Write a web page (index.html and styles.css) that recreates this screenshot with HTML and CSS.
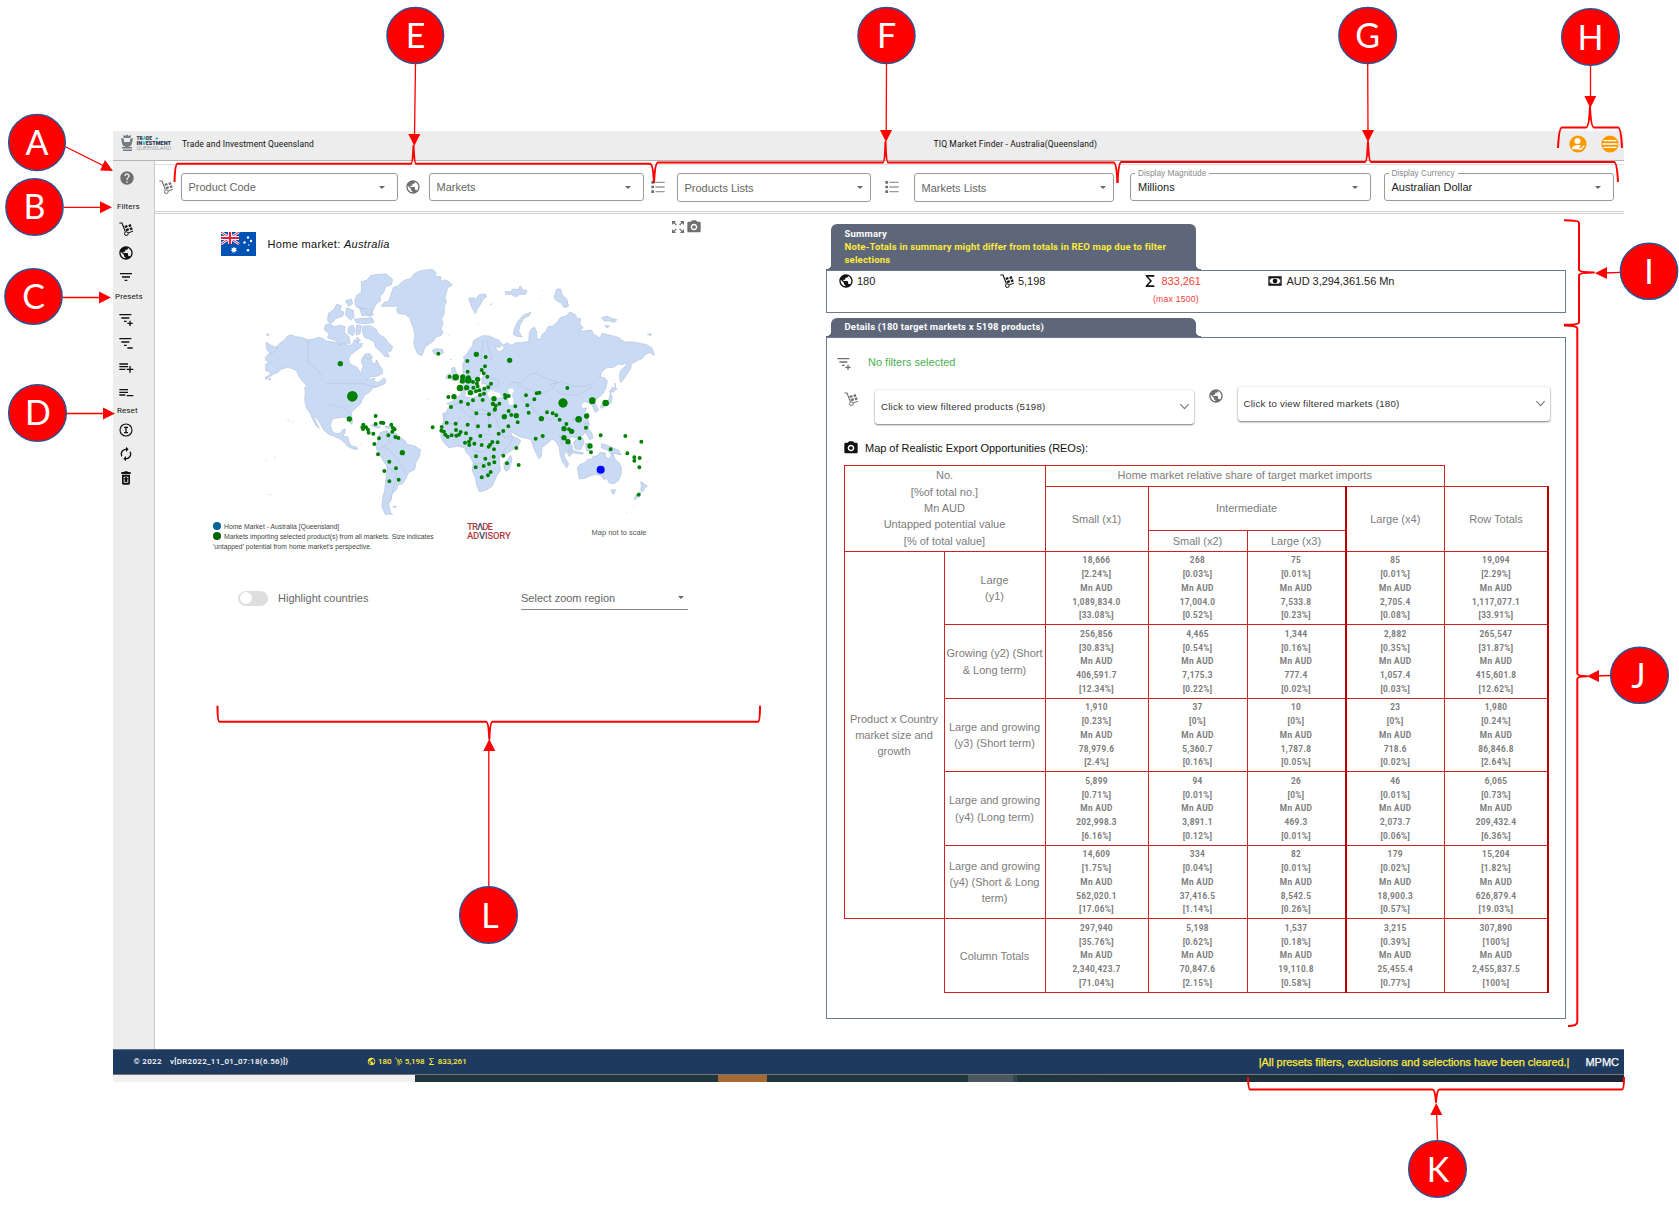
FILE: index.html
```html
<!DOCTYPE html>
<html lang="en">
<head>
<meta charset="utf-8">
<title>TIQ Market Finder</title>
<link rel="stylesheet" href="styles.css">
</head>
<body>
<svg class="defs" aria-hidden="true">
  <symbol id="help" viewBox="0 0 24 24"><path d="M12 2C6.48 2 2 6.48 2 12s4.480 10 10 10 10-4.480 10-10S17.520 2 12 2zm1 17h-2v-2h2v2zm2.070-7.750l-.9.920C13.450 12.900 13 13.500 13 15h-2v-.5c0-1.100.450-2.100 1.170-2.830l1.240-1.260c.370-.360.590-.860.590-1.410 0-1.100-.9-2-2-2s-2 .9-2 2H8c0-2.210 1.790-4 4-4s4 1.790 4 4c0 .880-.360 1.680-.930 2.250z"/></symbol>
  <symbol id="globe" viewBox="0 0 24 24"><path d="M12 2C6.480 2 2 6.480 2 12s4.480 10 10 10 10-4.480 10-10S17.520 2 12 2zm-1 17.930c-3.950-.490-7-3.850-7-7.930 0-.620.080-1.210.210-1.790L9 15v1c0 1.100.9 2 2 2v1.930zm6.900-2.540c-.260-.810-1-1.390-1.900-1.390h-1v-3c0-.550-.450-1-1-1H8v-2h2c.550 0 1-.450 1-1V7h2c1.100 0 2-.9 2-2v-.410c2.930 1.190 5 4.060 5 7.410 0 2.080-.8 3.970-2.100 5.390z"/></symbol>
  <symbol id="dolly" viewBox="0 0 24 24"><path d="M2 3h4l5 13" fill="none" stroke="currentColor" stroke-width="1.700"/><circle cx="12.500" cy="19" r="2.800" fill="none" stroke="currentColor" stroke-width="1.500"/><path d="M9.500 7.500l4-1.500 1.200 3-4 1.500zM15.500 6l3.500-1.500 1.200 3.500-3.500 1.300zM11.300 12.300l4.200-1.700 1.200 3.200-4.200 1.600zM17.500 10.500l3.500-1 1 3.300-3.500 1.200z"/><path d="M15 18l7.500-2.800" stroke="currentColor" stroke-width="1.500"/></symbol>
  <symbol id="filter" viewBox="0 0 24 24"><path d="M10 18h4v-2h-4v2zM3 6v2h18V6H3zm3 7h12v-2H6v2z"/></symbol>
  <symbol id="filter-plus" viewBox="0 0 24 24"><path d="M2 3h18v2H2zM5 8h12v2H5zM9 13h4v2H9zM17 13h2v3h3v2h-3v3h-2v-3h-3v-2h3z"/></symbol>
  <symbol id="filter-minus" viewBox="0 0 24 24"><path d="M2 3h18v2H2zM5 8h12v2H5zM9 13h4v2H9zM14 17h8v2h-8z"/></symbol>
  <symbol id="list-plus" viewBox="0 0 24 24"><path d="M2 5h13v2H2zM2 9h13v2H2zM2 13h9v2H2zM17 9h2v4h4v2h-4v4h-2v-4h-4v-2h4z"/></symbol>
  <symbol id="list-minus" viewBox="0 0 24 24"><path d="M2 6h13v2H2zM2 10h13v2H2zM2 14h9v2H2zM13 15h10v2H13z"/></symbol>
  <symbol id="list" viewBox="0 0 24 24"><path d="M2 3h4v4H2zM2 10h4v4H2zM2 17h4v4H2z"/><path opacity=".7" d="M8 4h14v2H8zM8 11h14v2H8zM8 18h14v2H8z"/></symbol>
  <symbol id="circle-i" viewBox="0 0 24 24"><circle cx="12" cy="12" r="9" fill="none" stroke="currentColor" stroke-width="1.700"/><path d="M9 7h6v2h-2v6h2v2H9v-2h2V9H9z"/></symbol>
  <symbol id="sync" viewBox="0 0 24 24"><path d="M12 6v3l4-4-4-4v3c-4.420 0-8 3.580-8 8 0 1.570.460 3.030 1.240 4.260L6.700 14.800c-.450-.830-.7-1.790-.7-2.800 0-3.310 2.690-6 6-6zm6.760 1.740L17.300 9.200c.440.840.7 1.790.7 2.800 0 3.310-2.690 6-6 6v-3l-4 4 4 4v-3c4.420 0 8-3.580 8-8 0-1.570-.460-3.030-1.240-4.260z"/></symbol>
  <symbol id="trash" viewBox="0 0 24 24"><path fill-rule="evenodd" d="M5 3h4l1-1h4l1 1h4v3H5zM6 7h12v13c0 1-1 2-2 2H8c-1 0-2-1-2-2zM8.500 10v9h7v-9zM12 10l4 4h-2v4h-4v-4H8z"/></symbol>
  <symbol id="camera" viewBox="0 0 24 24"><path d="M9 2L7.170 4H4c-1.100 0-2 .9-2 2v12c0 1.100.9 2 2 2h16c1.100 0 2-.9 2-2V6c0-1.100-.9-2-2-2h-3.170L15 2H9zm3 15c-2.760 0-5-2.240-5-5s2.240-5 5-5 5 2.240 5 5-2.240 5-5 5z"/><circle cx="12" cy="12" r="2.800"/></symbol>
  <symbol id="expand" viewBox="0 0 24 24"><path d="M3 3h6L6.900 5.100l3.300 3.300-1.300 1.300-3.300-3.300L3 9zM21 3v6l-2.600-2.600-3.300 3.300-1.300-1.300 3.300-3.300L15 3zM3 21v-6l2.600 2.600 3.300-3.300 1.300 1.300-3.300 3.300L9 21zM21 21h-6l2.100-2.100-3.300-3.300 1.300-1.300 3.300 3.300L21 15z"/></symbol>
  <symbol id="sigma" viewBox="0 0 24 24"><path d="M18.500 3h-13v1.800l6.500 7.200-6.500 7.200V21h13v-2.500H9.200l5.800-6.500-5.800-6.500h9.300z"/></symbol>
  <symbol id="money" viewBox="0 0 24 24"><path fill-rule="evenodd" d="M2 5h20v14H2zM4 8v8h16V8z"/><circle cx="12" cy="12" r="3.500"/><path d="M4 8h3L4 11zM20 8v3l-3-3zM4 16v-3l3 3zM20 16h-3l3-3z"/></symbol>
  <symbol id="chevron" viewBox="0 0 12 12"><path d="M1.500 3.500L6 8.300l4.500-4.800" fill="none" stroke="currentColor" stroke-width="1.200"/></symbol>
</svg>

<div class="app">
  <header class="topbar">
    <svg class="logo" viewBox="0 0 54 20">
      <g fill="#777b82"><path d="M3 1l2 1 2-1.500L9 2l2-1-.5 3h-7z"/><path d="M1 4l3 1v3l6 0V5l3-1-1 5-1 3H3L2 9z"/><path d="M4 8h6v4l-3 2-3-2zM2 13h10v1.500H2zM3 15.500h9V17H3z"/></g>
      <g font-family="Roboto, sans-serif" font-weight="900" font-size="6">
        <text x="16.500" y="5.800" textLength="15.500" lengthAdjust="spacingAndGlyphs" fill="#26324b">TR<tspan fill="#19bfc4">A</tspan>DE</text>
        <text x="35" y="5.600" fill="#19bfc4">+</text>
        <text x="16.500" y="11" textLength="34.500" lengthAdjust="spacingAndGlyphs" fill="#26324b">IN<tspan fill="#19bfc4">V</tspan>ESTMENT</text>
        <text x="16.500" y="16.400" textLength="34.500" lengthAdjust="spacingAndGlyphs" font-weight="300" fill="#777">QUEENSLAND</text>
      </g>
    </svg>
    <span class="org">Trade and Investment Queensland</span>
    <span class="title">TIQ Market Finder - Australia(Queensland)</span>
    <svg class="round" viewBox="0 0 18 18"><circle cx="9" cy="9" r="8.600" fill="#ff9800"/><circle cx="8.500" cy="6" r="3" fill="#fff"/><path d="M2.800 14c.5-3 3-4 5.700-4 1.500 0 2.500.2 3.500.9l-2.500 2.300.8 1.300z" fill="#fff"/><path d="M9.500 12.500l2 2 4-4" stroke="#fff" stroke-width="1.300" fill="none"/></svg>
    <svg class="round" viewBox="0 0 18 18"><circle cx="9" cy="9" r="8.600" fill="#ff9800"/><path d="M2.500 5.700h13M1.500 9h15M2.500 12.300h13" stroke="#fff" stroke-width="1.300"/></svg>
  </header>

  <div class="body">
    <nav class="side">
      <div class="cell first"><svg class="i gray"><use href="#help"/></svg></div>
      <div class="lbl filters">Filters</div>
      <div class="cell"><svg class="i"><use href="#dolly"/></svg></div>
      <div class="cell"><svg class="i"><use href="#globe"/></svg></div>
      <div class="cell"><svg class="i"><use href="#filter"/></svg></div>
      <div class="lbl presets">Presets</div>
      <div class="cell"><svg class="i"><use href="#filter-plus"/></svg></div>
      <div class="cell"><svg class="i"><use href="#filter-minus"/></svg></div>
      <div class="cell"><svg class="i"><use href="#list-plus"/></svg></div>
      <div class="cell"><svg class="i"><use href="#list-minus"/></svg></div>
      <div class="lbl reset">Reset</div>
      <div class="cell"><svg class="i"><use href="#circle-i"/></svg></div>
      <div class="cell"><svg class="i"><use href="#sync"/></svg></div>
      <div class="cell"><svg class="i"><use href="#trash"/></svg></div>
    </nav>

    <div class="content">
      <div class="toolbar">
        <svg class="i gray"><use href="#dolly"/></svg>
        <div class="select">Product Code<i class="caret"></i></div>
        <svg class="i gray"><use href="#globe"/></svg>
        <div class="select">Markets<i class="caret"></i></div>
        <svg class="i gray listicon"><use href="#list"/></svg>
        <div class="select tall">Products Lists<i class="caret"></i></div>
        <svg class="i gray"><use href="#list"/></svg>
        <div class="select tall">Markets Lists<i class="caret"></i></div>
        <div></div>
        <div class="select dark"><span class="float">Display Magnitude</span>Millions<i class="caret"></i></div>
        <div></div>
        <div class="select dark"><span class="float">Display Currency</span>Australian Dollar<i class="caret"></i></div>
      </div>

      <main class="main">
        <section class="mappane">
          <div class="maptools"><svg class="i gray"><use href="#expand"/></svg><svg class="i gray"><use href="#camera"/></svg></div>
          <div class="home">
            <svg class="flag" viewBox="0 0 35 24"><path fill="#0052b4" d="M0 0h35v24H0z"/><path d="M0 0l18 12M18 0L0 12" stroke="#fff" stroke-width="2.600"/><path d="M0 0l18 12M18 0L0 12" stroke="#e0203c" stroke-width="1"/><path d="M9 0v12M0 6h18" stroke="#fff" stroke-width="4"/><path d="M9 0v12M0 6h18" stroke="#e0203c" stroke-width="2.200"/><g fill="#fff"><path d="M13 14.500l.8 1.800 1.900-.5-.9 1.700 1.500 1.200-1.900.4 0 1.900-1.400-1.300-1.500 1.300v-1.900l-1.900-.4 1.500-1.200-.9-1.700 1.900.5z"/><circle cx="27" cy="5.500" r="1.200"/><circle cx="23.500" cy="10.500" r="1.200"/><circle cx="30" cy="9" r="1.200"/><circle cx="27" cy="18.300" r="1.300"/><circle cx="27.800" cy="13" r=".7"/></g></svg>
            <span>Home market: <em>Australia</em></span>
          </div>
          <svg class="map" viewBox="195 170 1185 744">
            <g fill="#c9daf4" stroke="#b3c3dc" stroke-width="2" stroke-linejoin="round">
              <path d="M243 396l12-8 6-10 12-5 14 6 18 2 20 8 18-3 12-5 14 4 12 8 22 2 12 9 16-5 14 6 12-2 6-14 10 0 4 12 10-2-2 10-12 8-10 8-12 9-5 12 2 12 12 8 10 4 8 12 4 8 4-12 4-10-6-14 4-14 14-5 10 6 4 16 8 4 6-12 8 16 8 10 2 14-14 8-20 2-16 12 26-8-2 10 12 4 18-14 6 6-4 12-16 5-20 8-10 12-14 8-8 14-4 12-14 12-12 12-2 12 4 12-2 14-6-4-6-14-12-4-14 2-16 2-8 8-2 14 4 16 12 8 14-2 6-10 8-2-2 12-4 10 14 2 2 12 4 10 8 6 12 2 2 8-12-2-14-6-10-10-12-12-16-8-22-8-14-12-10-18-14-22-8-4 10 22 8 16-10-8-12-24-6-14-10-14-6-24 2-24-2-14 6-6-10-10-12-16-8-18-14-8-16-2-16 4-10 10-14 6-30 20-26 8 20-14 22-10 8-10-14-4-10-8 2-10 12-4-2-10-14-2z"/>
              <path d="M198 396l14 8 22 10-12 10-10 6-12-12zM198 372l10 0-4 5zM205 507l8-3-3 5z"/>
              <path d="M543 288l10-12 12-2 6-14 4-14 6-16 12-2 10-10 14-10 14-3 12-15 16-8 24-4 16 0 10 10-6 8 20 4-2 14 12-6 14 6 10 10-14 8-4 14-4 14 4 14-6 14 0 22-8 14 4 16-6 14 6 14-6 8-16 4-6 12-14 10-10 6-6 14-6 14-12-6-8-16-4-18 4-18-4-22-8-22-4-12-14-10-20-2-6-14 8-8z"/>
              <path d="M484 214l16-4 12-14 20-4 26-1 20 16-4 16-18 6-4 16-12 12 2 14-14 10-10 22-8 16-12-12-14-12-16-6-4-20 6-14 14-8zM382 330l4-22 14-8 10-18 14 4-4 14 12 6-4 12-20 6-8 10-10 4zM436 272l18-6 4 14-12 8zM440 292l20 8 2 20-10 10-16-16zM462 326l54-4 6 14-22 4-30-2zM478 292l34 6 8 16-34 2zM375 345l14-6 14 10 18-4 14 4-2 16 14 14 4 20-20 0-16 4-10-14-22-6 4-14-14-10zM446 350l12-6 8 14-8 18-14-8zM470 344l14 2-4 24-12 4zM488 348l22-2 18 10 8 16 18 10 10 14 14 14-6 14-12-4 8 20-14-2-14-16-14-12-2-14-16-10-14-4-6-16zM470 380l12 10-10 8zM492 432l18-2 8 12-16 4z"/>
              <path d="M697 420l10-5 20 2 4 10-14 6-14-2zM755 473l10-2 2 12 10 14-4 10-20 2 6-12-4-12zM740 495l10-6 4 8-6 8-10 0z"/>
              <path d="M806 264l16-2 4 8 10-16 18-4 6 8-12 10-6 14-10 14-6 14-8-14-6-14zM915 244l16 0 8-8 16 2 6-12 8 14 12 0-4 12-18 0-12 8-12-8-18 0zM940 372l4-20 10-20 16-18 22-8-4 10-16 8-12 20-4 18 10 18-16-2zM1062 262l8-26 12 0 6 20 12 10 6 22-14 4-8-14-14-6zM1205 322l16-4 14 6 16 4-8 8-14-4-16 0zM1215 345l14 2-8 6zM1342 372l12-2-2 6z"/>
              <path d="M788 462l6-12-4-10 10-8 8-14 10-12 2-14 12-8 16-8 20 1 12 6 16 6 12 14-8 8-16-2 12 16 16-8-2-14 14-6 8 8 18-8 16 0 20-4 2-24 6-14 10-4 6 14 0 20 12 2 4-14 12-10 6-14 14-2 14-12 10-14 16-4 12-12 16 8 4 10 12 2-2 16 10 12-14 6 16 4 14-4 10 2 4 10 20 12 6-14 18 4 30 8 20 14 26 0 20 4 20 4 16 10 8 22-16-8-10 4-12 14-16 6-16 10-2 14-8 12-12 18-10 12-4-22 4-14 16-16 4-10-14 8-12-2-16 10-22 2-14 14-4 12 14 4 8 8-4 22-10 18-16 14-10 4 6 16 8 14-10 8-8-18-8-10-16-6-12 10 4 12 14-2-8 18 12 16 4 14-6 18-14 16-20 8-14-4-10 12 12 14 4 20-12 14-10-18-6 16 14 24-6 12-12-18-8-22-2-22-12-20-10-4-16 14-14 10-2 28-8 6-14-30-8-26-16-6-20-4-18-10-8-8 4 16 18 8 8 6-8 16-26 18-20 12-10-24-12-24-6-20-2-20 2-14-16 4-20-4-10-12 12-8 0-12-12 4 2 14-6 14-10-10-6-18-14-16-6 4 14 18 12 8-6 8-4-14-18-16-12 4-6 14-12 18-16 6-14-4-4-28 24-2 2-18-14-10 16-4 12-12 12-8 6-14 8-6 2 12-2 12 18 4 16-4 14-8 2-12 14-10 0-10-12 2 0-18 12-18-4-8-10 6-8 18-4 14-2 18-8 18-10 0-4-14-16 4z"/>
              <path d="M740 602l8-14 22-8 30-6 8 6-2 16 22 10 14-10 20 6 18 4 8 20 8 24 10 20 8 12 24-4-4 18-20 22-14 20-2 18 4 24-12 16-6 16-8 16-18 12-20 4-8-20-4-22-10-22 4-22-10-20-12-12-4-14-22-4-26 4-16-16-8-20 6-20 0-14z"/>
              <path d="M932 735l4 14-8 26-8 8-8-6 0-20 10-8zM1028 674l6 4-2 8-6-4z"/>
              <path d="M540 668l18-8 10 6 22 4 12 12 14 10 4 10 22 4 20 12-4 20-10 18-4 22-18 8-8 18-10 16-14 4-4 14-14 12-2 16-8 12 2 14 4 14 8 10-10 4-14-8-10-22 2-26 6-24 4-36 4-34-14-22-20-34 4-18z"/>
              <path d="M578 888l12 0-6 5zM512 645l14-4 16 10-10 2zM556 648l14 0-2 6-12-2z"/>
              <path d="M1132 772l8-10 14-4 8-10 12-2 6-8 12-2 8-10 16 2 0 12 12 6 6-10 0-14 6 12 6 14 12 10 6 14 0 18-8 20-14 10-14-2-8-14-8 4-8-12-18-4-18 6-14 6-16 2-2-12zM1234 838l12 0-4 14-6-4z"/>
              <path d="M1322 814l8 4 12 10-8 6-6 10-6-4 2-12zM1320 844l4 4-14 16-8 4 4-12z"/>
              <path d="M1078 676l10 4 16 18 8 18-8 2-18-20zM1105 720l20 2 26 6-4 4-40-6zM1120 696l16-14 12 2 4 14-10 20-16-2zM1156 700l14-2-6 8 6 14-10 2zM1204 700l16 4 18 8 18 8 8 14-20-4-12 0-12-12-16-6zM1155 638l10 2 0 16 10 10 4 18-10 4-8-14-6-18zM1156 615l8-8-2 14zM1200 590l10-14 16-6 6-24 4 14-2 18-14 6-12 10zM1228 545l10-14 14 4-12 10zM1245 518l2 14zM1118 626l8 0-4 6z"/>
              <path d="M262 628l6 4M276 634l4 4M197 752l4 0M222 742l4 0M208 853l6 0M482 699l3 2M1340 755l6-4M1300 884l3 2M1278 905l3 2M683 566l4 2M745 376l3 0M833 338l3 2M870 283l10-3M1018 267l3-2M1025 240l3 0M750 447l6 2"/>
            </g>
            <g fill="#fff"><path d="M862 548l10-10 12 6 14 4 8 12-18 2-20 0zM924 536l14-2 4 10-8 8 6 16 0 14-12 2-4-18 4-14z"/></g>
            <g fill="none" stroke="#afbfd8" stroke-width="1.500">
              <path d="M325 387v70l20 14 20 26M378 520h112l18 6 20 4 16-6M388 582l30 8 20 6 14 18M850 390l-8 60M858 384l10 40 10 20-20 10M858 490l20 14 20 8-6 20M925 525l14-10 20 4 30-26 20-4 40 20 20 6-10 20-30 14-20-4-30-10-20-10M1048 522l40-8 30 14 40 0 20-10-4 14-44 24-50-6zM1010 560l-20 20 20 30 40 20 20-14M960 560l20 20M780 590l30 30 30-8 26 0 20-2M866 604v60M728 640h40l14-20M768 640l10 40M820 620l14 50 40 4M800 690l30 4 30-10M818 720l30 6 20-20 26-8M820 760h40l20-30M836 770l20 14 14-20M850 810l10-24M570 700l20-20M550 710l20 10 26 30 20 40M560 770l30 20-20 90M560 665l10 30-30 20"/>
            </g>
            <g stroke="#008000" stroke-linecap="round" stroke-width="12">
              <path d="M715 430h0M802 452h0M857 440h0M855 468h0M845 479h0M851 489h0M862 499h0M803 484h0M749 499h0M873 520h0M865 531h0M853 535h0M852 550h0M838 540h0M828 543h0M840 554h0M831 520h0M819 515h0M820 532h0M833 528h0M819 570h0M848 569h0M804 581h0M783 574h0M745 560h0M753 590h0M915 554h0M916 562h0M926 557h0M978 555h0M1010 549h0M1018 547h0M1003 567h0M982 585h0M946 588h0M1102 533h0M898 580h0M879 580h0M887 586h0M885 597h0"/>
              <path stroke-width="16" d="M421 460h0M829 432h0M929 450h0M762 559h0M788 500h0M833 507h0M811 547h0M800 532h0M882 565h0M805 503h0M787 512h0"/>
              <path stroke-width="20" d="M767 501h0M780 533h0M805 510h0M1177 571h0M1217 578h0"/>
              <path stroke-width="32" d="M457 558h0"/><path stroke-width="28" d="M1089 578h0"/>
              <g transform="translate(0 540)">
                <path d="M527 77h0M527 101h0M543 97h0M550 98h0M574 103h0M578 112h0M584 117h0M577 124h0M565 135h0M586 140h0M595 143h0M537 144h0M523 161h0M534 192h0M568 214h0M588 234h0M553 242h0M568 273h0M596 268h0M490 103h0M487 111h0M498 111h0M489 116h0M504 118h0M506 127h0M520 130h0M698 111h0M725 110h0M724 121h0M732 124h0M736 133h0M743 139h0M755 135h0M768 119h0M769 136h0M777 133h0M782 125h0M740 97h0M767 100h0M803 103h0M829 69h0M867 72h0M834 108h0M869 107h0M798 129h0M841 137h0M812 145h0M807 154h0M795 157h0M808 164h0M823 160h0M845 164h0M866 169h0M870 164h0M877 155h0M893 156h0M882 177h0M896 130h0M910 122h0M925 108h0M953 96h0M926 62h0M934 74h0M986 67h0M828 198h0M856 205h0M881 199h0M883 216h0M867 221h0M851 227h0M827 231h0M872 245h0M864 255h0M845 261h0M910 196h0M921 219h0M949 173h0M956 224h0M1007 145h0M1028 137h0M1041 66h0M1058 69h0M1069 75h0M1079 88h0M1099 101h0M1107 117h0M1158 112h0M1139 144h0M1173 186h0M1202 135h0M1232 177h0M1276 137h0M1324 154h0M1282 189h0M1303 201h0M1303 211h0M1319 203h0M1318 231h0M1316 313h0M884 58h0M878 41h0"/>
                <path stroke-width="16" d="M448 86h0M607 187h0M913 79h0M949 76h0M1024 85h0M1092 115h0M1115 123h0M1092 142h0M1104 154h0M1170 167h0M1160 77h0"/>
                <path stroke-width="20" d="M1136 87h0"/>
                <path stroke="#00f" stroke-width="24" d="M1202 238h0"/>
              </g>
            </g>
          </svg>
          <div class="mapfoot">
            <div class="legend"><i class="dot blue"></i>Home Market - Australia [Queensland]<br><i class="dot"></i>Markets importing selected product(s) from all markets. Size indicates<br>'untapped' potential from home market's perspective.</div>
            <div class="ta"><span class="t1">TR<b>Λ</b>DE</span><span class="t2">AD<b>V</b>ISORY</span></div>
            <span class="scale">Map not to scale</span>
          </div>
          <div class="controls">
            <span class="toggle"></span><span class="hl">Highlight countries</span>
            <div class="region">Select zoom region<i class="caret"></i></div>
          </div>
        </section>

        <section class="right">
          <div class="tab sum">Summary<br><span class="note">Note-Totals in summary might differ from totals in REO map due to filter selections</span></div>
          <div class="panel stats">
            <div><svg class="i"><use href="#globe"/></svg>180</div>
            <div><svg class="i"><use href="#dolly"/></svg>5,198</div>
            <div class="red"><svg class="i"><use href="#sigma"/></svg>833,261<small>(max 1500)</small></div>
            <div><svg class="i"><use href="#money"/></svg>AUD 3,294,361.56 Mn</div>
          </div>
          <div class="tab det">Details (180 target markets x 5198 products)</div>
          <div class="panel details">
            <div class="nofilter"><svg class="i gray"><use href="#filter-plus"/></svg>No filters selected</div>
            <div class="drops">
              <svg class="i gray d1"><use href="#dolly"/></svg>
              <div class="drop">Click to view filtered products (5198)<svg><use href="#chevron"/></svg></div>
              <svg class="i gray d2"><use href="#globe"/></svg>
              <div class="drop second">Click to view filtered markets (180)<svg><use href="#chevron"/></svg></div>
            </div>
            <div class="reo"><svg class="i"><use href="#camera"/></svg>Map of Realistic Export Opportunities (REOs):</div>
            <table>
              <colgroup><col class="c1"><col class="c2"><col class="c3"><col class="c4"><col class="c5"><col class="c6"><col class="c7"></colgroup>
              <tr class="h1"><th colspan="2" rowspan="3">No.<br>[%of total no.]<br>Mn AUD<br>Untapped potential value<br>[% of total value]</th><th colspan="4">Home market relative share of target market imports</th><td class="none"></td></tr>
              <tr class="h2"><th rowspan="2">Small (x1)</th><th colspan="2" class="thick">Intermediate</th><th rowspan="2">Large (x4)</th><th rowspan="2" class="thick">Row Totals</th></tr>
              <tr class="h3"><th>Small (x2)</th><th class="thick">Large (x3)</th></tr>
              <tr><th rowspan="5">Product x Country market size and growth</th><th>Large<br>(y1)</th><td>18,666<br>[2.24%]<br>Mn AUD<br>1,089,834.0<br>[33.08%]</td><td>268<br>[0.03%]<br>Mn AUD<br>17,004.0<br>[0.52%]</td><td class="thick">75<br>[0.01%]<br>Mn AUD<br>7,533.8<br>[0.23%]</td><td>85<br>[0.01%]<br>Mn AUD<br>2,705.4<br>[0.08%]</td><td class="thick">19,094<br>[2.29%]<br>Mn AUD<br>1,117,077.1<br>[33.91%]</td></tr>
              <tr><th>Growing (y2) (Short<br>&amp; Long term)</th><td>256,856<br>[30.83%]<br>Mn AUD<br>406,591.7<br>[12.34%]</td><td>4,465<br>[0.54%]<br>Mn AUD<br>7,175.3<br>[0.22%]</td><td class="thick">1,344<br>[0.16%]<br>Mn AUD<br>777.4<br>[0.02%]</td><td>2,882<br>[0.35%]<br>Mn AUD<br>1,057.4<br>[0.03%]</td><td class="thick">265,547<br>[31.87%]<br>Mn AUD<br>415,601.8<br>[12.62%]</td></tr>
              <tr><th>Large and growing<br>(y3) (Short term)</th><td>1,910<br>[0.23%]<br>Mn AUD<br>78,979.6<br>[2.4%]</td><td>37<br>[0%]<br>Mn AUD<br>5,360.7<br>[0.16%]</td><td class="thick">10<br>[0%]<br>Mn AUD<br>1,787.8<br>[0.05%]</td><td>23<br>[0%]<br>Mn AUD<br>718.6<br>[0.02%]</td><td class="thick">1,980<br>[0.24%]<br>Mn AUD<br>86,846.8<br>[2.64%]</td></tr>
              <tr><th>Large and growing<br>(y4) (Long term)</th><td>5,899<br>[0.71%]<br>Mn AUD<br>202,998.3<br>[6.16%]</td><td>94<br>[0.01%]<br>Mn AUD<br>3,891.1<br>[0.12%]</td><td class="thick">26<br>[0%]<br>Mn AUD<br>469.3<br>[0.01%]</td><td>46<br>[0.01%]<br>Mn AUD<br>2,073.7<br>[0.06%]</td><td class="thick">6,065<br>[0.73%]<br>Mn AUD<br>209,432.4<br>[6.36%]</td></tr>
              <tr><th>Large and growing<br>(y4) (Short &amp; Long<br>term)</th><td>14,609<br>[1.75%]<br>Mn AUD<br>562,020.1<br>[17.06%]</td><td>334<br>[0.04%]<br>Mn AUD<br>37,416.5<br>[1.14%]</td><td class="thick">82<br>[0.01%]<br>Mn AUD<br>8,542.5<br>[0.26%]</td><td>179<br>[0.02%]<br>Mn AUD<br>18,900.3<br>[0.57%]</td><td class="thick">15,204<br>[1.82%]<br>Mn AUD<br>626,879.4<br>[19.03%]</td></tr>
              <tr><td class="none"></td><th>Column Totals</th><td>297,940<br>[35.76%]<br>Mn AUD<br>2,340,423.7<br>[71.04%]</td><td>5,198<br>[0.62%]<br>Mn AUD<br>70,847.6<br>[2.15%]</td><td class="thick">1,537<br>[0.18%]<br>Mn AUD<br>19,110.8<br>[0.58%]</td><td>3,215<br>[0.39%]<br>Mn AUD<br>25,455.4<br>[0.77%]</td><td class="thick">307,890<br>[100%]<br>Mn AUD<br>2,455,837.5<br>[100%]</td></tr>
            </table>
          </div>
        </section>
      </main>
    </div>
  </div>

  <footer class="foot">
    <span class="copy">© 2022</span><span class="ver">v[DR2022_11_01_07:18(6.56)]}</span>
    <span class="counts"><svg><use href="#globe"/></svg>180<svg><use href="#dolly"/></svg>5,198<svg><use href="#sigma"/></svg>833,261</span>
    <span class="msg">|All presets filters, exclusions and selections have been cleared.|</span><span class="who">MPMC</span>
  </footer>
  <div class="strip"><i class="s1"></i><i class="s2"></i><i class="s3"></i><i class="s4"></i></div>
</div>

<svg class="callouts" viewBox="0 0 1679 1215">
  <g fill="none" stroke="#f00" stroke-width="2" stroke-linejoin="round">
    <path d="M174.500 182q.5-18 3-18.200H411q1.500 0 2.500-17.800 1 17.800 2.500 17.800H650q3 0 4 19.200"/>
    <path d="M654 183q1-20.500 4-20.500H883q1.700 0 2.500-20.500.8 20.500 2.500 20.500h225.500q3 0 4 20.500"/>
    <path d="M1117.500 183q1-21 4-21H1365q2 0 3-20 1 20 3 20h243q3 0 4 20"/>
    <path d="M1558 148q1-20.500 4-20.500h24q3 0 4-20.500 1 20.500 4 20.500h24q3 0 4 20.500"/>
    <path d="M1564 220.300q15 0 15 2.500v47q0 2.500 15 2.800-15 .3-15 2.800v47q0 2.400-15 2.400"/>
    <path d="M1564 325.500q13.300 0 13.300 3v345q0 2.500 9.700 2.700-9.700.3-9.700 2.700v343q0 4-9.300 4"/>
    <path d="M1248 1077q.3 12.500 2 12.500h182.500q2.500 0 3.500 12.500 1-12.500 3.500-12.500H1622q2 0 2-12.500"/>
    <path d="M217.500 705.700q0 16 2 16H486q2.500 0 3.300 17.300.8-17.300 3.300-17.300H758q2 0 2-16"/>
  </g>
  <g stroke="#f00" stroke-width="1.300"><path d="M65 146.500l40 20M64 207.300h40M63 297.500h40M66 413.500h40M415.500 64l-1 72M886.500 64l-.3 70M1367.700 64l.3 70M1590.500 66v34M1621 272.300l-16 .7M1611 675.500l-16 .5M1437.500 1141l-1-32M488.800 887V749"/></g>
  <g fill="#f00"><path d="M113 171l-13-.5 5-10.500zM112 207.300l-12 6v-12zM111 297.500l-12 6v-12zM115 413.500l-12 6v-12zM414.300 146l-6-12h12zM886 142l-6-12h12zM1368 142l-6-12h12zM1590.300 108l-6-12h12zM1595 273.300l12-6.300v12zM1587 676.300l12-6.300v12zM1436.300 1103l-6 12h12zM489.300 739l-6 12h12z"/></g>
  <g fill="#f00" stroke="#2f528f" stroke-width="1.500">
    <ellipse cx="37" cy="142.500" rx="28.300" ry="28"/><ellipse cx="34.500" cy="207" rx="28.600" ry="28.300"/><ellipse cx="33.500" cy="296.500" rx="28.600" ry="27.800"/><ellipse cx="37.500" cy="413" rx="28.800" ry="28.300"/><ellipse cx="415.300" cy="35.500" rx="28.300" ry="28"/><ellipse cx="886.500" cy="35.500" rx="28.500" ry="28"/><ellipse cx="1367.700" cy="35.500" rx="28.800" ry="28"/><ellipse cx="1590.500" cy="37" rx="28.800" ry="28.300"/><ellipse cx="1649" cy="271.300" rx="28.600" ry="28"/><ellipse cx="1639.500" cy="675.300" rx="28.800" ry="28"/><ellipse cx="1437.500" cy="1169" rx="28.800" ry="28.300"/><ellipse cx="488.500" cy="915" rx="28.800" ry="28.300"/>
  </g>
  <g class="letters"><text x="37" y="155">A</text><text x="34.500" y="219">B</text><text x="33.500" y="308.500">C</text><text x="38" y="425">D</text><text x="415.500" y="48">E</text><text x="886.500" y="48">F</text><text x="1367.700" y="48">G</text><text x="1590.500" y="50">H</text><text x="1649" y="284">I</text><text x="1638.500" y="688">J</text><text x="1438" y="1181.500">K</text><text x="490" y="927.500">L</text></g>
</svg>
</body>
</html>
```
FILE: styles.css
```css
* { box-sizing: border-box; }
body { margin: 0; position: relative; width: 1679px; height: 1215px; overflow: hidden; background: #fff; font: 11px/14px "Liberation Sans", Arial, sans-serif; color: #222; }
svg { display: block; fill: currentColor; flex: none; }
.defs { position: absolute; width: 0; height: 0; }
.i { width: 16px; height: 16px; color: #111; }
.i.gray { color: #6f6f6f; }
.app { width: 1511px; padding-top: 131px; margin-left: 113px; }

.topbar { display: flex; align-items: center; height: 30px; padding: 0 5px 4px 7px; background: #ededed; border-bottom: 1.500px solid #b3b3b3; font-family: Roboto, sans-serif; font-size: 8.500px; color: #111; }
.logo { width: 54px; height: 20px; }
.org { margin-left: 8px; width: 751.500px; letter-spacing: .1px; }
.title { flex: 1; letter-spacing: .13px; }
.round { width: 18px; height: 18px; margin-left: 14.500px; }

.body { display: flex; height: 888px; }
.side { width: 42px; background: #ededed; border-right: 1px solid #c9c9c9; }
.cell { display: flex; justify-content: center; align-items: center; height: 24.200px; padding-right: 15px; }
.cell.first { height: 33px; padding-right: 14px; }
.lbl { font: 8px/10px Roboto, sans-serif; color: #111; white-space: nowrap; letter-spacing: .1px; }
.filters { height: 23px; padding: 8px 0 0 4px; }
.presets { height: 18.300px; padding: 2.500px 0 0 2px; }
.reset { height: 13.200px; padding: 1.500px 0 0 4px; }
.content { flex: 1; min-width: 0; }

.toolbar { display: grid; grid-template-columns: 22px 217px 31px 215px 33px 194px 43px 200px 16.500px 240.500px 13px 230px; justify-items: center; align-items: start; height: 53px; padding: 9px 0 0 3.500px; border-bottom: 3px double #cfcfcf; background: linear-gradient(#dcdcdc, #dcdcdc) 0 3px / 100% 1px no-repeat; }
.toolbar > .i { margin-top: 9px; }
.toolbar > .i:first-child { margin-left: -8px; }
.toolbar > .listicon { margin-left: -5px; }
.select { position: relative; display: flex; align-items: center; justify-content: space-between; justify-self: stretch; height: 28px; margin-top: 3px; padding: 0 12px 0 7px; border: 1.500px solid #9b9b9b; border-radius: 3px; color: #666; }
.select.tall { height: 29px; padding-right: 7px; }
.select.dark { color: #222; }
.float { position: absolute; left: 4px; top: -6px; padding: 0 3px; background: #fff; font-size: 8.300px; line-height: 10px; color: #8a8a8a; }
.caret { width: 0; height: 0; border: 3.500px solid transparent; border-top-color: #666; border-bottom: 0; }

.main { display: flex; height: 835px; }
.mappane { width: 670.500px; }
.maptools { display: flex; justify-content: flex-end; padding: 4.500px 124px 0 0; }
.home { display: flex; align-items: center; gap: 11.500px; height: 24px; margin: -2.500px 0 0 66px; color: #111; font-size: 11px; letter-spacing: .33px; }
.flag { width: 35px; height: 24px; }
.map { width: 395px; height: 248px; margin: 11px 0 0 110px; }
.mapfoot { display: flex; height: 32px; margin: 6.500px 0 0 58px; }
.legend { width: 253px; font-size: 6.800px; line-height: 10.400px; color: #444; white-space: nowrap; }
.dot { display: inline-block; width: 8px; height: 8px; margin-right: 3px; border-radius: 50%; background: #006400; vertical-align: -1px; }
.dot.blue { background: #069; }
.ta { display: flex; flex-direction: column; width: 44px; padding-left: 1px; color: #b33b44; font: 500 9.500px/9.500px Roboto, sans-serif; white-space: nowrap; }
.ta b { font-weight: 500; color: #2c4a6e; }
.t1 { letter-spacing: -.9px; }
.t2 { letter-spacing: -.2px; }
.scale { margin: 4px 0 0 81.500px; font-size: 7.500px; color: #555; }
.controls { display: flex; align-items: center; height: 24px; margin: 32.500px 0 0 83px; color: #666; }
.toggle { width: 30px; height: 15px; border-radius: 8px; background: #dedede; }
.toggle::before { content: ""; display: block; width: 12px; height: 12px; margin: 1.500px; border-radius: 50%; background: #fff; }
.hl { margin-left: 10px; width: 243px; }
.region { display: flex; justify-content: space-between; align-items: center; width: 167px; height: 24px; padding-right: 4px; border-bottom: 1.500px solid #888; }

.right { width: 740.500px; padding-top: 10px; }
.tab { position: relative; width: 365px; margin-left: 5px; padding: 3px 14px 0; border-radius: 6px 6px 0 0; background: #5d6779; color: #fff; font: 700 9.500px/13.200px Roboto, sans-serif; }
.tab::before, .tab::after { content: ""; position: absolute; bottom: 0; width: 5px; height: 6px; }
.tab::before { left: -5px; background: radial-gradient(circle at 0 0, transparent 5px, #5d6779 5.500px); }
.tab::after { right: -5px; background: radial-gradient(circle at 100% 0, transparent 5px, #5d6779 5.500px); }
.tab.sum { height: 45.500px; letter-spacing: .19px; }
.tab.det { height: 19px; margin-top: 5px; padding-top: 2px; letter-spacing: .18px; }
.note { color: #ffeb3b; }
.panel { border: 1.500px solid #6d7a8e; }
.stats { display: grid; grid-template-columns: 161px 143.500px 125px 1fr; height: 43.500px; padding: 2.500px 0 0 11px; }
.stats > div { display: flex; flex-wrap: wrap; align-content: flex-start; align-items: center; column-gap: 3.500px; }
.stats .red { color: #f44336; }
.stats > div { letter-spacing: -.05px; }
.red small { width: 100%; padding-left: 11px; font-size: 8.700px; line-height: 12px; margin-top: 4px; letter-spacing: .2px; }
.details { height: 681.500px; padding: 16px 0 0 16.500px; }
.nofilter { display: flex; align-items: center; gap: 16px; margin-left: -7px; color: #4caf50; }
.nofilter .i { margin: 2px 0 -2px; }
.drops { display: flex; align-items: flex-start; margin-top: 17px; }
.d1 { margin: 4px 16px 0 0; }
.d2 { margin: 1px 14px 0 14px; }
.drop { display: flex; align-items: center; justify-content: space-between; width: 318.500px; height: 33.500px; margin-top: 3px; padding: 0 4px 0 6px; border-radius: 3px; box-shadow: 0 1px 2px rgba(0,0,0,.5), 0 0 2px rgba(0,0,0,.12); font-size: 9.700px; letter-spacing: .22px; color: #333; }
.drop.second { width: 312px; margin-top: 0; }
.drop svg { width: 11px; height: 11px; color: #777; }
.reo { display: flex; align-items: center; gap: 6px; height: 16px; margin-top: 16px; color: #111; letter-spacing: -.03px; }

table { width: 704px; margin: 9px 0 0 .5px; table-layout: fixed; border-collapse: collapse; color: #7c7c7c; text-align: center; }
.c1 { width: 100px; } .c2 { width: 101px; } .c3 { width: 103px; } .c4 { width: 99px; } .c5 { width: 98.500px; } .c6 { width: 99px; } .c7 { width: 103.500px; }
th, td { padding: 0; height: 73.500px; border: 1px solid #d02020; vertical-align: middle; }
th { font-weight: 400; line-height: 16.400px; }
td { padding-top: 1px; font: 700 8.300px/13.750px Roboto, sans-serif; letter-spacing: .33px; }
tr.h1 th, tr.h1 td { height: 21.300px; }
tr.h2 th { height: 44px; }
tr.h3 th { height: 21.200px; }
.thick { border-right: 2px solid #c00000; }
td.none { border-color: transparent; border-style: hidden; }
tr.h1 td.none { border-left: 1px solid #d02020; border-bottom: 1px solid #d02020; }
tr:last-child td.none { border-top: 1px solid #d02020; border-right: 1px solid #d02020; }

.foot { display: flex; align-items: center; height: 25px; padding: 0 5px 1px 20.500px; background: #1f3a5f; border-top: 1px solid #5b7088; color: #fff; font: 500 8px/12px Roboto, sans-serif; white-space: nowrap; }
.copy { width: 36.500px; letter-spacing: .3px; }
.ver { width: 197px; letter-spacing: .3px; }
.counts { display: flex; align-items: center; gap: 2px; color: #ffeb3b; }
.counts svg { width: 9px; height: 9px; }
.msg { margin-left: auto; color: #ffeb3b; font: 10.900px "Liberation Sans", sans-serif; -webkit-text-stroke: .25px; }
.who { margin-left: 16px; font: 11px "Liberation Sans", sans-serif; -webkit-text-stroke: .25px; }
.strip { display: flex; height: 8px; background: linear-gradient(90deg, #20363e 60%, #1a2638); border-top: 1px solid #777; }
.s1 { width: 301.500px; background: #f1f1f1; }
.s2 { width: 49px; margin-left: 303.500px; background: #a86832; }
.s3 { width: 45px; margin-left: 201px; background: #4a5960; }
.s4 { width: 4px; background: #35454e; }

.callouts { position: absolute; left: 0; top: 0; width: 1679px; height: 1215px; pointer-events: none; }
.letters { font: 34px Lato, sans-serif; fill: #fff; text-anchor: middle; }
```
